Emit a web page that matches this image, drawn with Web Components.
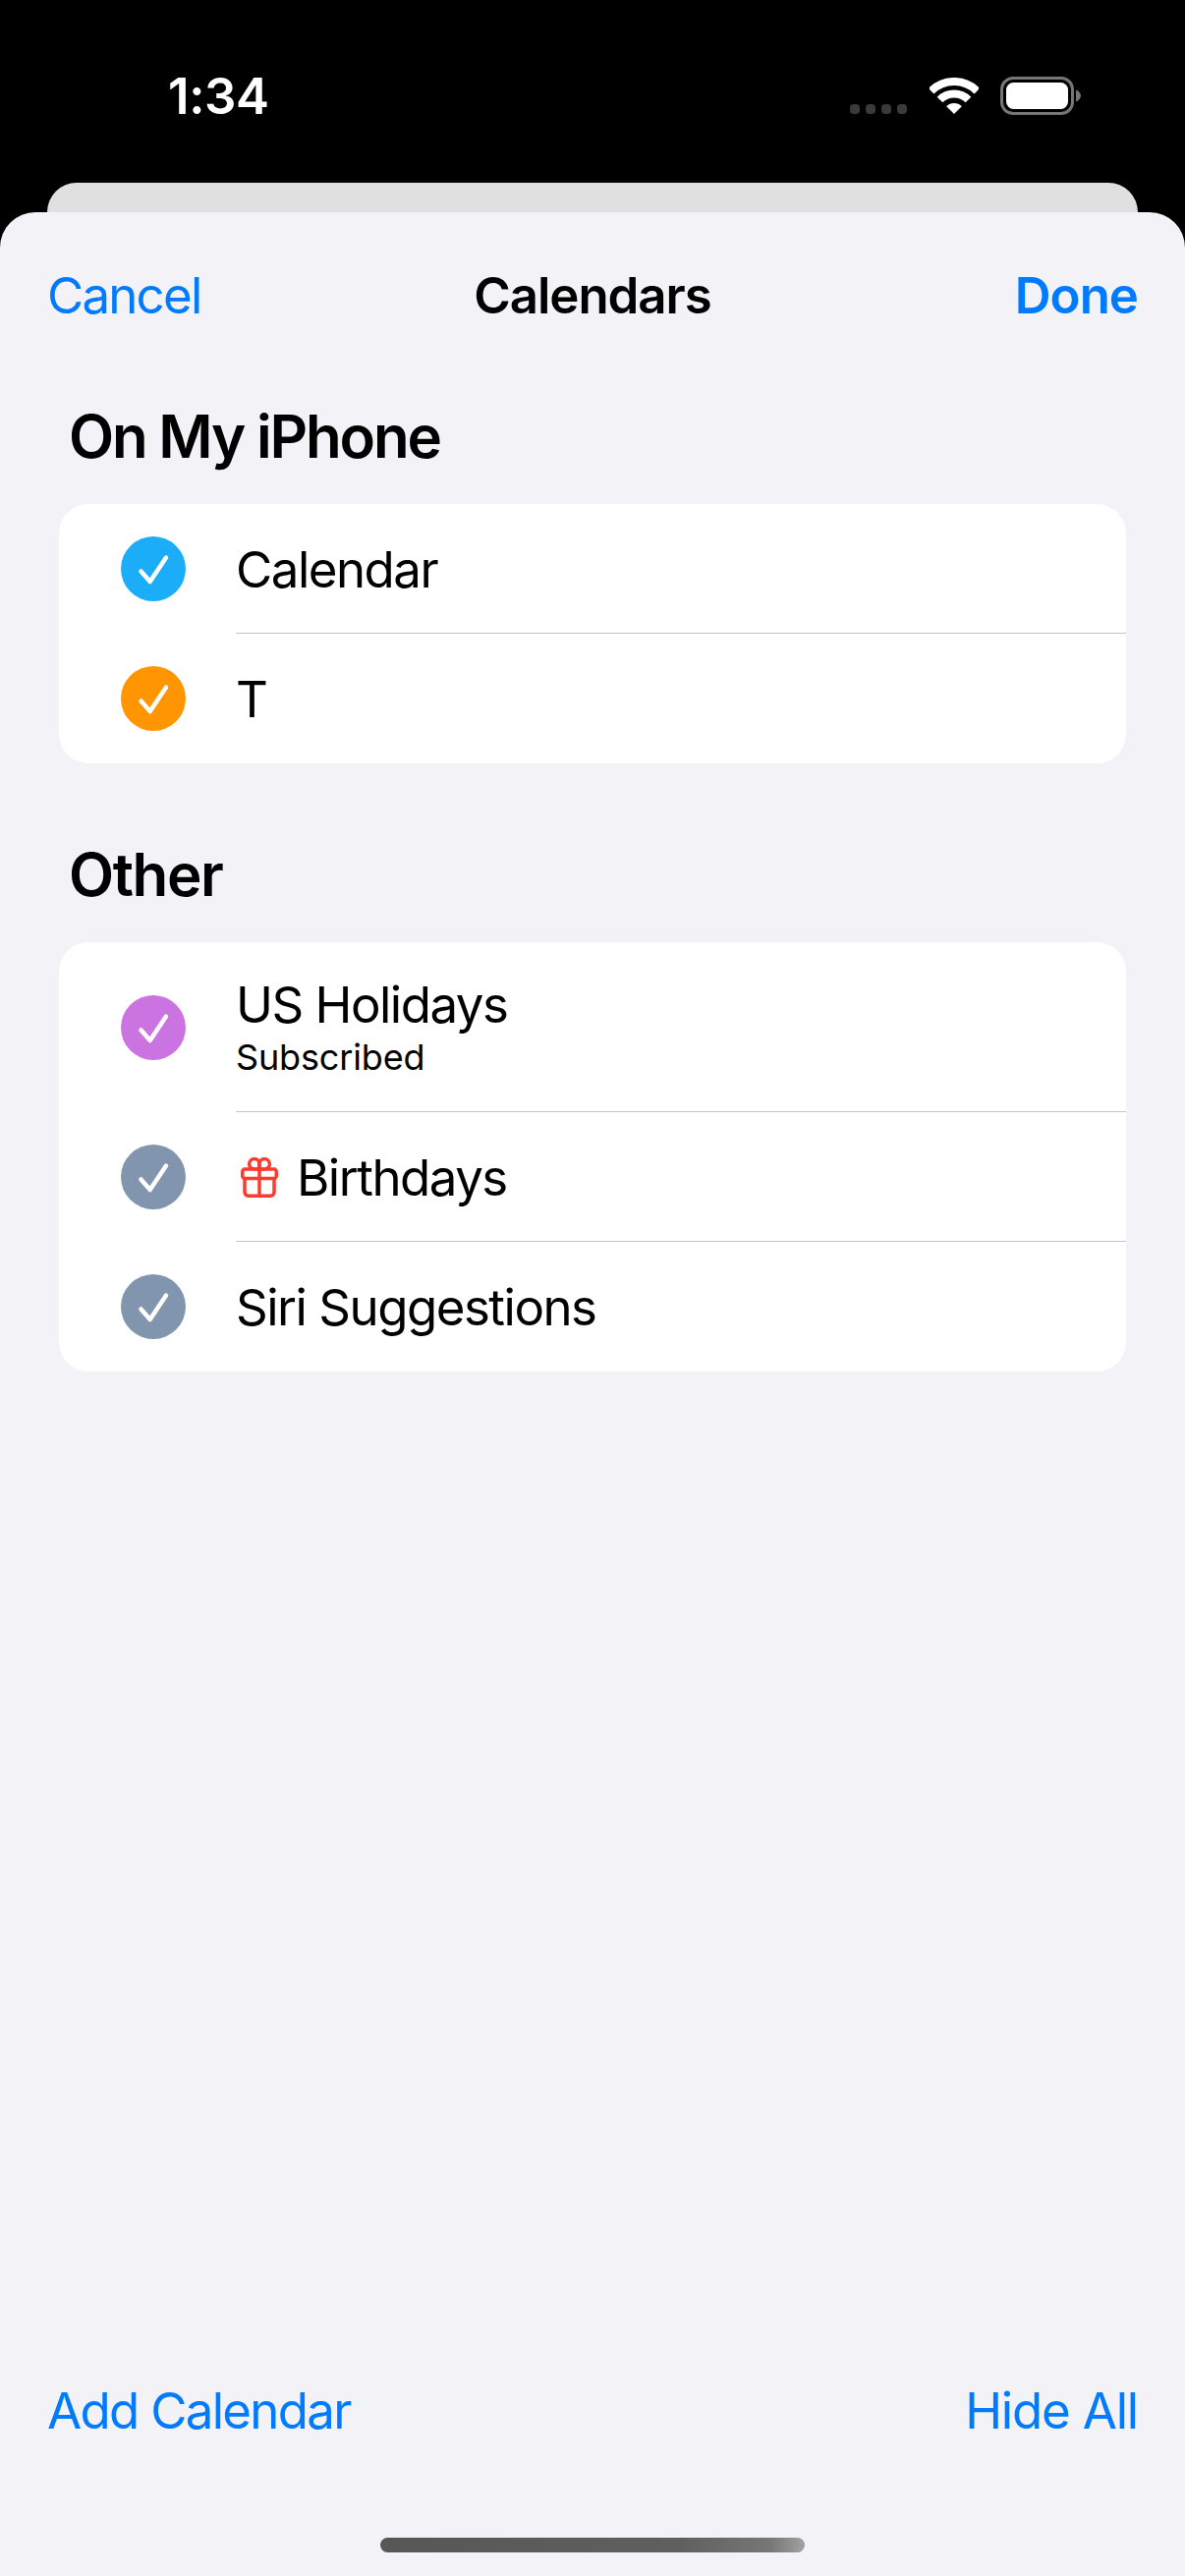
<!DOCTYPE html>
<html lang="en">
<head>
<meta charset="utf-8">
<title>Calendars</title>
<style>
  html, body { margin: 0; height: 100%; background: #000; }
  body { font-family: Inter, "Noto Sans", sans-serif; color: #000; }
</style>
</head>
<body>
<calendars-screen>
  <status-bar time="1:34"></status-bar>
  <sheet-peek></sheet-peek>
  <sheet-panel>
    <nav-bar slot="top" title="Calendars" left="Cancel" right="Done"></nav-bar>
    <calendar-section title="On My iPhone" first>
      <calendar-row color="#1badf8" label="Calendar" divider></calendar-row>
      <calendar-row color="#ff9500" label="T"></calendar-row>
    </calendar-section>
    <calendar-section title="Other">
      <calendar-row color="#cb73e1" label="US Holidays" sub="Subscribed" divider></calendar-row>
      <calendar-row color="#8295af" label="Birthdays" gift divider></calendar-row>
      <calendar-row color="#8295af" label="Siri Suggestions"></calendar-row>
    </calendar-section>
    <sheet-footer slot="bottom" left="Add Calendar" right="Hide All"></sheet-footer>
  </sheet-panel>
</calendars-screen>

<script>
class CalendarsScreen extends HTMLElement {
  constructor() {
    super();
    this.attachShadow({ mode: "open" }).innerHTML = `
      <style>
        :host { display: flex; flex-direction: column; height: 2622px; width: 1206px; overflow: hidden; background: #000; }
      </style>
      <slot></slot>`;
  }
}

class StatusBar extends HTMLElement {
  connectedCallback() {
    this.attachShadow({ mode: "open" }).innerHTML = `
      <style>
        :host { display: flex; align-items: flex-start; justify-content: space-between; height: 186px; flex: none; padding: 0 106px 0 171px; box-sizing: border-box; }
        .time { color: #fff; font-size: 51px; font-weight: 600; line-height: 62px; margin-top: 67px; letter-spacing: -0.4px; }
        .icons { display: flex; align-items: flex-start; margin-top: 78px; }
        .dots { display: flex; gap: 6px; margin-top: 28px; margin-right: 23px; }
        .dots i { width: 10px; height: 10px; border-radius: 4px; background: #3a3a3a; }
        svg { display: block; }
        .wifi { margin-top: 1px; margin-right: 22px; }
      </style>
      <div class="time">${this.getAttribute("time")}</div>
      <div class="icons">
        <div class="dots"><i></i><i></i><i></i><i></i></div>
        <svg class="wifi" width="50" height="37" viewBox="0 0 50 37">
          <path d="M1.6 13.7A33 33 0 0 1 48.4 13.7" fill="none" stroke="#fff" stroke-width="8"/>
          <path d="M10.5 22.5A20.5 20.5 0 0 1 39.5 22.5" fill="none" stroke="#fff" stroke-width="8"/>
          <path d="M25 37L17.2 29.2A11 11 0 0 1 32.8 29.2Z" fill="#fff"/>
        </svg>
        <svg width="82" height="39" viewBox="0 0 82 39">
          <rect x="1.5" y="1.5" width="72" height="36" rx="11.5" fill="none" stroke="#767676" stroke-width="3"/>
          <rect x="6" y="6" width="63" height="27" rx="7.5" fill="#fff"/>
          <path d="M77 13.5C80 14.5 82 17 82 19.5S80 24.5 77 25.5Z" fill="#767676"/>
        </svg>
      </div>`;
  }
}

class SheetPeek extends HTMLElement {
  constructor() {
    super();
    this.attachShadow({ mode: "open" }).innerHTML = `
      <style>
        :host { display: block; flex: none; height: 30px; margin: 0 48px; background: #e0e0e0; border-radius: 30px 30px 0 0; }
      </style>`;
  }
}

class SheetPanel extends HTMLElement {
  constructor() {
    super();
    this.attachShadow({ mode: "open" }).innerHTML = `
      <style>
        :host { display: flex; flex-direction: column; flex: 1; min-height: 0; background: #f2f2f7; border-radius: 36px 36px 0 0; }
        .body { flex: 1; padding: 0 60px; }
      </style>
      <slot name="top"></slot>
      <div class="body"><slot></slot></div>
      <slot name="bottom"></slot>`;
  }
}

class NavBar extends HTMLElement {
  connectedCallback() {
    this.attachShadow({ mode: "open" }).innerHTML = `
      <style>
        :host { display: grid; grid-template-columns: 1fr auto 1fr; align-items: center; height: 168px; padding: 0 48px; font-size: 51px; }
        .l { color: #007aff; letter-spacing: -1.8px; }
        .t { font-weight: 600; letter-spacing: -1.05px; }
        .r { color: #007aff; font-weight: 600; text-align: right; letter-spacing: -1px; }
      </style>
      <div class="l">${this.getAttribute("left")}</div>
      <div class="t">${this.getAttribute("title")}</div>
      <div class="r">${this.getAttribute("right")}</div>`;
  }
}

class CalendarSection extends HTMLElement {
  connectedCallback() {
    this.attachShadow({ mode: "open" }).innerHTML = `
      <style>
        :host { display: block; padding-top: 77px; }
        :host([first]) { padding-top: 24px; }
        h2 { margin: 0 0 33px; padding-left: 10px; font-size: 60px; line-height: 72px; font-weight: 600; letter-spacing: -1.4px; }
        :host([first]) h2 { letter-spacing: -2.2px; }
        .card { background: #fff; border-radius: 30px; overflow: hidden; }
      </style>
      <h2>${this.getAttribute("title")}</h2>
      <div class="card"><slot></slot></div>`;
  }
}

class CalendarRow extends HTMLElement {
  connectedCallback() {
    const sub = this.getAttribute("sub");
    const gift = this.hasAttribute("gift");
    this.attachShadow({ mode: "open" }).innerHTML = `
      <style>
        :host { display: flex; align-items: stretch; padding-left: 63px; }
        .mark { flex: none; align-self: center; width: 66px; height: 66px; border-radius: 50%; background: ${this.getAttribute("color")}; margin-right: 51px; }
        .mark svg { display: block; }
        .text { flex: 1; display: flex; flex-direction: column; justify-content: center; box-sizing: border-box; min-height: 132px; padding-top: 2px; }
        :host([divider]) .text { border-bottom: 1px solid #c6c6c8; }
        :host([sub]) .text { height: 173px; padding-top: 0; }
        .label { display: flex; align-items: center; font-size: 51px; line-height: 60px; letter-spacing: -1.5px; }
        .label svg { margin: 0 19px 0 5px; flex: none; }
        .sub { font-size: 36px; line-height: 44px; margin-top: 1px; letter-spacing: -0.15px; }
      </style>
      <div class="mark">
        <svg width="66" height="66" viewBox="0 0 66 66"><path d="M20.5 35.5L29.7 46L46 21.5" fill="none" stroke="#fff" stroke-width="4.5" stroke-linecap="round" stroke-linejoin="round"/></svg>
      </div>
      <div class="text">
        <div class="label">${gift ? `<svg width="38" height="41" viewBox="0 0 38 41" fill="none" stroke="#ff3b30" stroke-width="3.5" stroke-linejoin="round">
          <rect x="1.75" y="12" width="34.5" height="9.5" rx="2.5"/>
          <path d="M4 21V35.5A4 4 0 0 0 8 39.25H30A4 4 0 0 0 34 35.5V21"/>
          <path d="M19 12V39.25"/>
          <path d="M19 12H13.5A5.2 5.2 0 1 1 19 6.5Z"/>
          <path d="M19 12H24.5A5.2 5.2 0 1 0 19 6.5Z"/>
        </svg>` : ""}<span>${this.getAttribute("label")}</span></div>
        ${sub ? `<div class="sub">${sub}</div>` : ""}
      </div>`;
  }
}

class SheetFooter extends HTMLElement {
  connectedCallback() {
    this.attachShadow({ mode: "open" }).innerHTML = `
      <style>
        :host { display: block; flex: none; }
        .links { display: flex; justify-content: space-between; padding: 0 48px; color: #007aff; font-size: 51px; line-height: 62px; }
        .add { letter-spacing: -1.7px; }
        .hide { letter-spacing: -1.2px; }
        .bar { width: 432px; height: 15px; margin: 98px auto 24px; border-radius: 8px; background: linear-gradient(90deg, #575757 0%, #5f5f5f 70%, #777 92%, #a2a2a2 100%); }
      </style>
      <div class="links"><span class="add">${this.getAttribute("left")}</span><span class="hide">${this.getAttribute("right")}</span></div>
      <div class="bar"></div>`;
  }
}

customElements.define("calendars-screen", CalendarsScreen);
customElements.define("status-bar", StatusBar);
customElements.define("sheet-peek", SheetPeek);
customElements.define("sheet-panel", SheetPanel);
customElements.define("nav-bar", NavBar);
customElements.define("calendar-section", CalendarSection);
customElements.define("calendar-row", CalendarRow);
customElements.define("sheet-footer", SheetFooter);
</script>
</body>
</html>
